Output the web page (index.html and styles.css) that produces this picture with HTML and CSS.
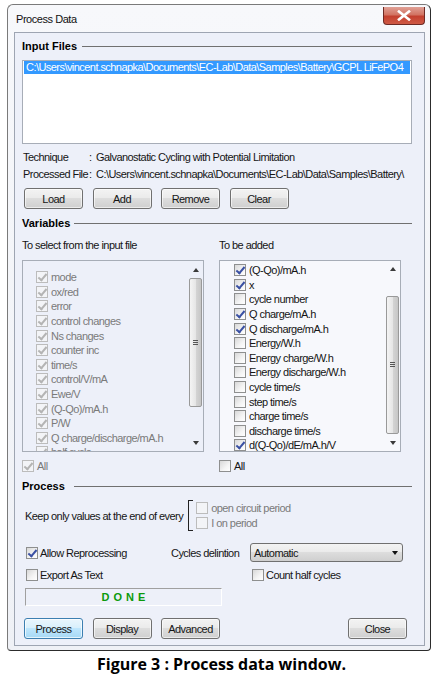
FILE: index.html
```html
<!DOCTYPE html>
<html lang="en">
<head>
    <meta charset="UTF-8">
    <title>Process Data</title>
    <link rel="stylesheet" href="styles.css">
</head>
<body>
<div class="window">
    <div class="titlebar">
        <span class="title">Process Data</span>
        <span class="close">
            <svg width="14" height="11" viewBox="0 0 14 11"><path d="M2 1.5 L12 9.5 M12 1.5 L2 9.5" stroke="#fff" stroke-width="2.6" stroke-linecap="square"/></svg>
        </span>
    </div>

    <div class="client">
        <!-- Input files -->
        <div class="group-head"><span>Input Files</span><i></i></div>
        <div class="filelist">
            <div class="file sel">C:\Users\vincent.schnapka\Documents\EC-Lab\Data\Samples\Battery\GCPL LiFePO4</div>
        </div>
        <div class="info first"><span class="key">Technique</span><span class="colon">:</span><span>Galvanostatic Cycling with Potential Limitation</span></div>
        <div class="info"><span class="key">Processed File</span><span class="colon">:</span><span>C:\Users\vincent.schnapka\Documents\EC-Lab\Data\Samples\Battery\</span></div>
        <div class="btn-row">
            <button class="btn">Load</button>
            <button class="btn">Add</button>
            <button class="btn">Remove</button>
            <button class="btn">Clear</button>
        </div>

        <!-- Variables -->
        <div class="group-head vars"><span>Variables</span><i></i></div>
        <div class="var-cols">
            <div class="var-col">
                <div class="cap">To select from the input file</div>
                <div class="checklist off">
                    <div class="items">
                        <div class="item"><span class="cb on"></span>mode</div>
                        <div class="item"><span class="cb on"></span>ox/red</div>
                        <div class="item"><span class="cb on"></span>error</div>
                        <div class="item"><span class="cb on"></span>control changes</div>
                        <div class="item"><span class="cb on"></span>Ns changes</div>
                        <div class="item"><span class="cb on"></span>counter inc</div>
                        <div class="item"><span class="cb on"></span>time/s</div>
                        <div class="item"><span class="cb on"></span>control/V/mA</div>
                        <div class="item"><span class="cb on"></span>Ewe/V</div>
                        <div class="item"><span class="cb on"></span>(Q-Qo)/mA.h</div>
                        <div class="item"><span class="cb on"></span>P/W</div>
                        <div class="item"><span class="cb on"></span>Q charge/discharge/mA.h</div>
                        <div class="item"><span class="cb on"></span>half cycle</div>
                    </div>
                    <div class="vscroll">
                        <div class="arrow up"></div>
                        <div class="thumb"></div>
                        <div class="arrow down"></div>
                    </div>
                </div>
                <div class="all off"><span class="cb on"></span>All</div>
            </div>

            <div class="var-col">
                <div class="cap">To be added</div>
                <div class="checklist added">
                    <div class="items">
                        <div class="item"><span class="cb on"></span>(Q-Qo)/mA.h</div>
                        <div class="item"><span class="cb on"></span>x</div>
                        <div class="item"><span class="cb"></span>cycle number</div>
                        <div class="item"><span class="cb on"></span>Q charge/mA.h</div>
                        <div class="item"><span class="cb on"></span>Q discharge/mA.h</div>
                        <div class="item"><span class="cb"></span>Energy/W.h</div>
                        <div class="item"><span class="cb"></span>Energy charge/W.h</div>
                        <div class="item"><span class="cb"></span>Energy discharge/W.h</div>
                        <div class="item"><span class="cb"></span>cycle time/s</div>
                        <div class="item"><span class="cb"></span>step time/s</div>
                        <div class="item"><span class="cb"></span>charge time/s</div>
                        <div class="item"><span class="cb"></span>discharge time/s</div>
                        <div class="item"><span class="cb on"></span>d(Q-Qo)/dE/mA.h/V</div>
                    </div>
                    <div class="vscroll">
                        <div class="arrow up"></div>
                        <div class="thumb"></div>
                        <div class="arrow down"></div>
                    </div>
                </div>
                <div class="all"><span class="cb"></span>All</div>
            </div>
        </div>

        <!-- Process -->
        <div class="group-head proc"><span>Process</span><i></i></div>
        <div class="keep">
            <span>Keep only values at the end of every</span>
            <span class="bracket"></span>
            <div class="periods">
                <div class="item off"><span class="cb"></span>open circuit period</div>
                <div class="item off"><span class="cb"></span>I on period</div>
            </div>
        </div>
        <div class="settings">
            <div class="opt first"><span class="cb on"></span>Allow Reprocessing</div>
            <div>Cycles delintion</div>
            <div class="combo"><span>Automatic</span><i></i></div>
            <div class="opt first"><span class="cb"></span>Export As Text</div>
            <div></div>
            <div class="opt half"><span class="cb"></span>Count half cycles</div>
        </div>
        <div class="status">DONE</div>
        <div class="btn-row bottom">
            <button class="btn default">Process</button>
            <button class="btn">Display</button>
            <button class="btn">Advanced</button>
            <button class="btn close-btn">Close</button>
        </div>
    </div>
</div>
<div class="caption">Figure 3 : Process data window.</div>
</body>
</html>
```

FILE: styles.css
```css
body {
    margin: 0;
    background: #fff;
    font-family: "Liberation Sans", Arial, sans-serif;
    font-size: 11px;
    letter-spacing: -0.55px;
    color: #151515;
}

/* window frame */
.window {
    box-sizing: border-box;
    width: 424px;
    margin: 4px 0 0 7px;
    padding: 0 5px 4px 6px;
    border: 1px solid #7a7a7a;
    border-right-color: #2c2c2c;
    border-bottom-color: #2c2c2c;
    border-radius: 6px 6px 4px 4px;
    background: linear-gradient(#f7f8fb, #eff1f6);
}

.titlebar {
    display: flex;
    justify-content: space-between;
    align-items: flex-start;
    height: 27px;
}

.title {
    padding: 8px 0 0 2px;
    line-height: 13px;
    letter-spacing: -0.45px;
    color: #111;
}

.close {
    margin-top: 2px;
    width: 42px;
    height: 18px;
    box-sizing: border-box;
    border: 1px solid #6e2a24;
    border-top: none;
    border-radius: 0 0 4px 4px;
    background: linear-gradient(#e0a095, #d27463 45%, #c3402f 55%, #cf5a45);
    display: flex;
    align-items: center;
    justify-content: center;
}

.client {
    border: 1px solid #9ea5b2;
    background: #edf0f9;
    padding: 7px 12px 6px 7px;
}

/* group headers with etched line */
.group-head {
    display: flex;
    align-items: center;
    height: 13px;
    line-height: 13px;
    font-weight: bold;
    letter-spacing: 0;
    color: #000;
}

.group-head i {
    flex: 1;
    margin-left: 5px;
    border-top: 1px solid #707070;
}

.group-head.vars { margin-top: 8px; }
.group-head.vars i { margin-left: 4px; }
.group-head.proc { margin-top: 8px; }
.group-head.proc i { margin-left: 9px; }

.filelist {
    margin-top: 7px;
    height: 84px;
    box-sizing: border-box;
    border: 1px solid #a7adb7;
    background: #fff;
    padding: 0 1px;
}

.file {
    height: 13px;
    line-height: 13px;
    padding-left: 2px;
    white-space: nowrap;
    overflow: hidden;
}

.file.sel {
    background: #3399ff;
    color: #fff;
}

.info {
    display: flex;
    height: 17px;
    line-height: 17px;
    padding-left: 1px;
    white-space: nowrap;
    overflow: hidden;
}

.info.first { margin-top: 5px; }
.info .key { width: 66px; flex: none; }
.info .colon { width: 7px; flex: none; }

/* push buttons */
.btn-row {
    display: flex;
    gap: 9.5px;
    margin-top: 5px;
    padding-left: 2px;
}

.btn {
    width: 59px;
    height: 21px;
    box-sizing: border-box;
    padding: 0;
    border: 1px solid #707070;
    border-radius: 3px;
    background: linear-gradient(#f3f3f3, #ebebeb 45%, #dddddd 50%, #cfcfcf);
    box-shadow: inset 0 0 0 1px rgba(255, 255, 255, 0.6);
    font: inherit;
    letter-spacing: inherit;
    color: #151515;
}

.btn.default {
    border-color: #3c7fb1;
    background: linear-gradient(#eaf6fd, #d9f0fc 45%, #bee6fd 50%, #a7d9f5);
    box-shadow: inset 0 0 0 1px rgba(255, 255, 255, 0.7);
}

.btn-row.bottom { margin-top: 12px; }

.close-btn {
    margin-left: auto;
    margin-right: 5px;
}

/* variables */
.var-cols {
    display: flex;
    gap: 15px;
    margin-top: 9px;
}

.var-col { width: 182px; }

.cap {
    height: 13px;
    line-height: 13px;
}

.checklist {
    margin-top: 8px;
    height: 192px;
    box-sizing: border-box;
    border: 1px solid #a7adb7;
    display: flex;
    overflow: hidden;
}

.checklist.added { background: #f7f8fc; }

.items {
    flex: 1;
    padding: 9px 0 0 13px;
    overflow: hidden;
}

.added .items { padding: 2px 0 0 14px; }

.item {
    display: flex;
    align-items: center;
    gap: 3px;
    height: 14.6px;
    white-space: nowrap;
}

.off .item,
.item.off,
.all.off { color: #7a7a7a; }

/* check boxes */
.cb {
    position: relative;
    flex: none;
    width: 12px;
    height: 12px;
    box-sizing: border-box;
    border: 1px solid #8e8f8f;
    background: linear-gradient(135deg, #d8d8d8, #f4f4f4 60%, #fff);
}

.cb.on::after {
    content: "";
    position: absolute;
    left: 3px;
    top: 0;
    width: 3px;
    height: 7px;
    border: solid #3a50a3;
    border-width: 0 2px 2px 0;
    transform: rotate(40deg);
}

.off .cb,
.item.off .cb {
    border-color: #bcbcbc;
    background: #f3f4f7;
}

.off .cb.on::after { border-color: #b4b4b4; }

/* scroll bars */
.vscroll {
    width: 13px;
    margin: 0 1px 0 0;
    display: flex;
    flex-direction: column;
    align-items: center;
}

.arrow {
    height: 17px;
    width: 13px;
    display: flex;
    align-items: center;
    justify-content: center;
}

.arrow::after {
    content: "";
    border-left: 3.5px solid transparent;
    border-right: 3.5px solid transparent;
}

.arrow.up::after { border-bottom: 4px solid #3a3a3a; }
.arrow.down::after { border-top: 4px solid #3a3a3a; }

.arrow.down { margin-top: auto; }

.thumb {
    width: 13px;
    height: 129px;
    box-sizing: border-box;
    border: 1px solid #999;
    border-radius: 2px;
    background: linear-gradient(90deg, #f4f4f4, #e6e6e6 50%, #d4d4d4 55%, #c6c6c6);
    display: flex;
    align-items: center;
    justify-content: center;
}

.thumb::after {
    content: "";
    width: 5px;
    height: 5px;
    background: repeating-linear-gradient(#555 0 1px, transparent 1px 2px);
}

.added .thumb {
    margin-top: 18px;
    height: 140px;
}

.all {
    display: flex;
    align-items: center;
    gap: 3px;
    height: 13px;
    margin-top: 7px;
}

/* process options */
.keep {
    display: flex;
    align-items: center;
    height: 31px;
    margin-top: 7px;
    padding-left: 3px;
    white-space: nowrap;
}

.bracket {
    width: 5px;
    height: 31px;
    box-sizing: border-box;
    margin-left: 5px;
    border: 1px solid #222;
    border-right: none;
}

.periods {
    align-self: stretch;
    margin-left: 3px;
    padding-top: 1px;
}

.periods .item { height: 14.5px; }

.settings {
    display: grid;
    grid-template-columns: 149px 79px 153px;
    grid-template-rows: 19px 13px;
    row-gap: 6px;
    align-items: center;
    margin-top: 12px;
    white-space: nowrap;
}

.opt {
    display: flex;
    align-items: center;
    gap: 2px;
}

.opt.first { padding-left: 4px; }
.opt.half { padding-left: 2px; }

.combo {
    height: 19px;
    box-sizing: border-box;
    border: 1px solid #707070;
    border-radius: 3px;
    background: linear-gradient(#f3f3f3, #ebebeb 45%, #dddddd 50%, #cfcfcf);
    display: flex;
    align-items: center;
    justify-content: space-between;
    padding: 0 4px 0 3px;
}

.combo i {
    border-left: 3.5px solid transparent;
    border-right: 3.5px solid transparent;
    border-top: 4px solid #111;
}

.status {
    width: 197px;
    height: 18px;
    box-sizing: border-box;
    margin: 7px 0 0 3px;
    border: 1px solid;
    border-color: #a0a0a0 #fff #fff #a0a0a0;
    text-align: center;
    line-height: 16px;
    padding-left: 4px;
    font-weight: bold;
    letter-spacing: 4px;
    color: #0b9a0b;
}

.caption {
    margin-top: 3px;
    padding-right: 3px;
    text-align: center;
    font-family: "Open Sans", sans-serif;
    font-weight: bold;
    font-size: 16px;
    line-height: 20px;
    letter-spacing: 0;
    color: #000;
}
```
